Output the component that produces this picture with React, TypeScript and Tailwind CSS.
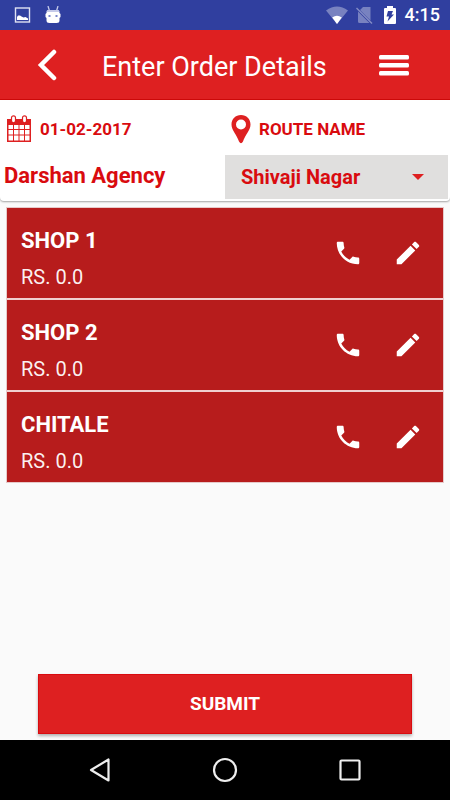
import React from "react";

const shops = [
  { name: "SHOP 1", total: "RS. 0.0" },
  { name: "SHOP 2", total: "RS. 0.0" },
  { name: "CHITALE", total: "RS. 0.0" },
];

function StatusBar() {
  return (
    <div className="flex h-[30px] items-center justify-between bg-[#303f9f] pr-2.5 pl-3.5 text-white">
      <div className="flex items-center gap-3.5">
        <svg width="17" height="16" viewBox="0 0 17 16" aria-hidden="true">
          <rect x="1.500" y="1" width="14" height="14" fill="none" stroke="#dfe2f3" strokeWidth="1.400" />
          <path d="M3 13v-3l1-1.500h2l1.500 1 2 1 2-.5 2.500 1.500V13z" fill="#fff" />
        </svg>
        <svg width="16" height="18" viewBox="0 0 16 18" aria-hidden="true">
          <path d="M3 0l1.500 5M13 0l-1.500 5" stroke="#c5cae9" strokeWidth="1.300" />
          <path d="M4 4h8q2.500 0 2.500 3l1 1v3l-1 1v2.500Q14.500 17 11.500 17h-7Q1.500 17 1.500 14.500V12l-1-1V8l1-1Q1.500 4 4 4z" fill="#fff" />
          <path d="M3 4h10q1.500 0 1.500 2h-13Q1.500 4 3 4z" fill="#c5cae9" />
          <rect x="3.500" y="9" width="2" height="2" fill="#7986cb" />
          <rect x="10.500" y="9" width="2" height="2" fill="#7986cb" />
        </svg>
      </div>
      <div className="flex items-center">
        <svg width="22" height="18" viewBox="0 0 22 18" aria-hidden="true">
          <path d="M0 4.500Q11-3.500 22 4.500L11 18z" fill="#fff" opacity="0.35" />
          <path d="M6.200 11.500Q11 8 15.800 11.500L11 18z" fill="#fff" />
        </svg>
        <svg className="ml-2" width="17" height="18" viewBox="0 0 17 18" aria-hidden="true">
          <path d="M4 4l3-3h7.500v13.500zM2 5.500L13.500 17H3.500Q2 17 2 15.500z" fill="#fff" opacity="0.35" />
          <path d="M.5 2L16 17.500" stroke="#fff" strokeWidth="1.400" opacity="0.4" />
        </svg>
        <svg className="ml-2.5" width="14" height="18" viewBox="0 0 14 18" aria-hidden="true">
          <path d="M4 2V0h6v2h2q1 0 1 1v14q0 1-1 1H2q-1 0-1-1V3q0-1 1-1z" fill="#fff" />
          <path d="M5 5h5L8.500 8.500H11L4.500 15.500 6 10.500H3.500z" fill="#303f9f" />
        </svg>
        <span className="ml-2 text-lg leading-5 font-medium">4:15</span>
      </div>
    </div>
  );
}

function Header() {
  return (
    <header className="flex h-[70px] items-center bg-[#de2021] pr-10 pl-9 text-white shadow-[inset_0_-1px_0_#cf0a0a]">
      <button type="button" aria-label="Back" className="flex w-8 items-center">
        <svg width="22" height="32" viewBox="0 0 22 32" aria-hidden="true">
          <path d="M18 3L5 16l13 13" fill="none" stroke="#fff" strokeWidth="4.500" strokeLinecap="round" />
        </svg>
      </button>
      <h1 className="flex-1 pt-1 pl-[34px] text-[27px] leading-8 font-normal">Enter Order Details</h1>
      <button type="button" aria-label="Menu">
        <svg width="32" height="24" viewBox="0 0 32 24" aria-hidden="true">
          <g fill="#fff">
            <rect x="1" y="2" width="30" height="4.500" rx="1.500" />
            <rect x="1" y="10" width="30" height="4.500" rx="1.500" />
            <rect x="1" y="18" width="30" height="4.500" rx="1.500" />
          </g>
        </svg>
      </button>
    </header>
  );
}

function OrderInfo() {
  return (
    <section className="grid grid-cols-2 rounded-b-sm bg-white pb-0.5 font-bold text-[#d90b0f] shadow-[0_1px_2px_rgba(0,0,0,0.35)]">
      <div className="flex h-[55px] items-center gap-2 pt-0.5 pl-1.5">
        <svg width="26" height="28" viewBox="0 0 26 28" aria-hidden="true">
          <path d="M1 4h24v23H1z" fill="#de2021" />
          <g fill="#fff">
            <path d="M2.500 10H7v4H2.500zM8 10h4.500v4H8zM13.500 10H18v4h-4.500zM19 10h4.500v4H19z" />
            <path d="M2.500 15H7v4.500H2.500zM8 15h4.500v4.500H8zM13.500 15H18v4.500h-4.500zM19 15h4.500v4.500H19z" />
            <path d="M2.500 20.500H7V25.500H2.500zM8 20.500h4.500v5H8zM13.500 20.500H18v5h-4.500zM19 20.500h4.500v5H19z" />
          </g>
          <g fill="#fff" stroke="#de2021" strokeWidth="1.200">
            <rect x="5.500" y=".8" width="4" height="7" rx="2" />
            <rect x="16.500" y=".8" width="4" height="7" rx="2" />
          </g>
        </svg>
        <span className="text-[17px] leading-6">01-02-2017</span>
      </div>
      <label htmlFor="route" className="flex h-[55px] items-center gap-2 pt-0.5 pl-1.5">
        <svg width="20" height="30" viewBox="0 0 20 30" aria-hidden="true">
          <path
            fillRule="evenodd"
            d="M10 1C4.500 1 .5 5 .5 10.500c0 6 5.500 10.500 7.500 17q2 3.500 4 0c2-6.500 7.500-11 7.500-17C19.500 5 15.500 1 10 1zM10 5.500a5 5 0 1 1 0 10 5 5 0 0 1 0-10z"
            fill="#de2021"
          />
        </svg>
        <span className="text-[17px] leading-6">ROUTE NAME</span>
      </label>
      <div className="flex h-11 items-center pb-0.5 pl-1 text-[22px] leading-7">Darshan Agency</div>
      <div className="relative mr-0.5">
        <select
          id="route"
          defaultValue="Shivaji Nagar"
          className="h-11 w-full appearance-none bg-[#e0dfde] pr-12 pl-4 text-[20px] font-bold"
        >
          <option>Shivaji Nagar</option>
        </select>
        <svg
          className="pointer-events-none absolute top-[19px] right-6"
          width="12"
          height="6"
          viewBox="0 0 12 6"
          aria-hidden="true"
        >
          <path d="M0 0h12L6 6z" fill="#de2021" />
        </svg>
      </div>
    </section>
  );
}

function ShopRow({ name, total }: { name: string; total: string }) {
  return (
    <li className="flex h-[90px] items-center bg-[#b71c1c] pr-6 pl-3.5 text-white">
      <div className="flex-1 pt-2.5">
        <h2 className="text-[22px] leading-8 font-bold">{name}</h2>
        <p className="mt-1.5 text-xl leading-7 font-normal text-white/95">{total}</p>
      </div>
      <button type="button" aria-label={`Call ${name}`}>
        <svg width="30" height="30" viewBox="0 0 24 24" fill="#fff" aria-hidden="true">
          <path d="M6.620 10.790c1.440 2.830 3.760 5.140 6.590 6.590l2.200-2.200c.27-.27.67-.36 1.020-.24 1.120.37 2.330.57 3.570.57.55 0 1 .45 1 1V20c0 .55-.45 1-1 1-9.390 0-17-7.610-17-17 0-.55.45-1 1-1h3.500c.55 0 1 .45 1 1 0 1.250.2 2.450.57 3.570.11.35.03.74-.25 1.020l-2.200 2.200z" />
        </svg>
      </button>
      <button type="button" aria-label={`Edit ${name}`} className="-mr-1 ml-[30px]">
        <svg width="30" height="30" viewBox="0 0 24 24" fill="#fff" aria-hidden="true">
          <path d="M3 17.250V21h3.750L17.810 9.940l-3.750-3.750L3 17.250zM20.710 7.040c.39-.39.39-1.020 0-1.410l-2.340-2.340c-.39-.39-1.020-.39-1.410 0l-1.830 1.830 3.750 3.750 1.830-1.830z" />
        </svg>
      </button>
    </li>
  );
}

function NavBar() {
  return (
    <nav className="flex h-[60px] items-center justify-center gap-[95px] bg-black">
      <button type="button" aria-label="Back">
        <svg width="30" height="30" viewBox="0 0 30 30" aria-hidden="true">
          <path d="M23.500 4.500v21L6 15z" fill="none" stroke="#eee" strokeWidth="2.200" strokeLinejoin="round" />
        </svg>
      </button>
      <button type="button" aria-label="Home">
        <svg width="30" height="30" viewBox="0 0 30 30" aria-hidden="true">
          <circle cx="15" cy="15" r="11" fill="none" stroke="#eee" strokeWidth="2.200" />
        </svg>
      </button>
      <button type="button" aria-label="Recent apps">
        <svg width="30" height="30" viewBox="0 0 30 30" aria-hidden="true">
          <rect x="5.500" y="5.500" width="19" height="19" rx="1" fill="none" stroke="#eee" strokeWidth="2.200" />
        </svg>
      </button>
    </nav>
  );
}

export default function App() {
  return (
    <div className="flex min-h-screen flex-col bg-[#fafafa] font-[Roboto,sans-serif]">
      <StatusBar />
      <Header />
      <OrderInfo />
      <main className="flex flex-1 flex-col">
        <ul className="mx-1.5 mt-1.5 flex flex-col gap-0.5 border border-[#e6c9c9] bg-[#f0cfcf]">
          {shops.map((shop) => (
            <ShopRow key={shop.name} name={shop.name} total={shop.total} />
          ))}
        </ul>
        <button
          type="button"
          className="mx-[38px] mt-auto mb-1.5 h-[60px] border border-[#d90b0f] bg-[#de2021] text-[19px] font-bold text-white shadow-[0_2px_3px_rgba(0,0,0,0.3)]"
        >
          SUBMIT
        </button>
      </main>
      <NavBar />
    </div>
  );
}
